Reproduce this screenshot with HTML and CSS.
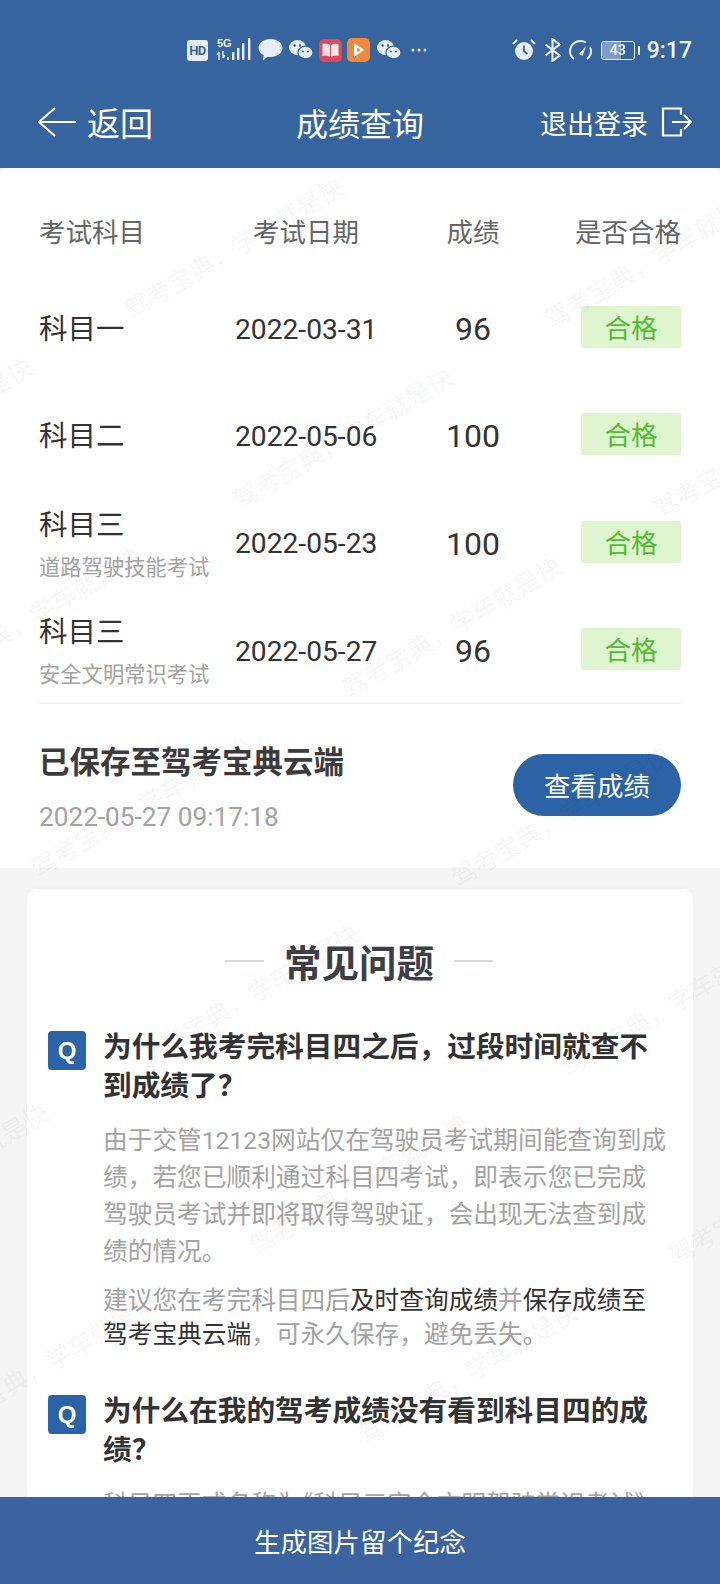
FILE: index.html
```html
<!DOCTYPE html>
<html lang="zh-CN">
<head>
    <meta charset="UTF-8">
    <meta name="viewport" content="width=device-width, initial-scale=1.0">
    <title>成绩查询</title>
    <link rel="stylesheet" href="styles.css">
</head>
<body>
<div class="page">
    <header class="top">
        <div class="status">
            <span class="hd">HD</span>
            <svg class="ic-net" width="36" height="24" viewBox="0 0 36 24">
                <text x="1" y="9" class="net-text">5G</text>
                <path d="M3 14v8M3 14l-2 3M7 13v7M7 20l2-3" stroke="#e8eef7" stroke-width="1.4" fill="none"/>
                <rect x="11" y="19" width="2" height="3" fill="#e8eef7"/>
                <rect x="16" y="14" width="2.4" height="8" fill="#e8eef7"/>
                <rect x="21" y="10" width="2.4" height="12" fill="#e8eef7"/>
                <rect x="26" y="5" width="2.4" height="17" fill="#e8eef7"/>
                <rect x="32" y="0" width="2.4" height="22" fill="#e8eef7"/>
            </svg>
            <svg class="ic-bubble" width="25" height="22" viewBox="0 0 25 22">
                <path d="M12.5 0C19 0 24.500 3.800 24.500 9S19 18 12.500 18c-1 0-2-.1-3-.3L5 21.500l.6-5.300C2.200 14.600.500 12 .500 9 .500 3.800 6 0 12.500 0z" fill="#e8eef7"/>
            </svg>
            <svg class="ic-wx" width="24" height="20" viewBox="0 0 24 20">
                <ellipse cx="8.500" cy="7.500" rx="8.500" ry="7.500" fill="#e8eef7"/>
                <circle cx="5.700" cy="5.500" r="1.200" fill="#36649f"/>
                <circle cx="11" cy="5.500" r="1.200" fill="#36649f"/>
                <ellipse cx="16.500" cy="12.500" rx="7.500" ry="6.300" fill="#e8eef7" stroke="#36649f" stroke-width="1.200"/>
                <circle cx="14" cy="11.500" r="1" fill="#36649f"/>
                <circle cx="19" cy="11.500" r="1" fill="#36649f"/>
            </svg>
            <svg class="ic-book" width="23" height="23" viewBox="0 0 23 23">
                <rect width="23" height="23" rx="5" fill="#de4a5c"/>
                <path d="M3.500 5c3-.6 5.800-.4 7.500 1v12c-1.700-1.200-4.500-1.500-7.500-1zM19.500 5c-3-.6-5.800-.4-7.500 1v12c1.700-1.200 4.500-1.500 7.500-1z" fill="#f9e6e8"/>
            </svg>
            <svg class="ic-play" width="23" height="24" viewBox="0 0 23 24">
                <rect width="23" height="24" rx="5" fill="#f4883a"/>
                <path d="M7 5v14l10-7zM10 9.500v5l3.500-2.500z" fill="#fff" fill-rule="evenodd"/>
            </svg>
            <svg class="ic-wx" width="24" height="20" viewBox="0 0 24 20">
                <ellipse cx="8.500" cy="7.500" rx="8.500" ry="7.500" fill="#e8eef7"/>
                <circle cx="5.700" cy="5.500" r="1.200" fill="#36649f"/>
                <circle cx="11" cy="5.500" r="1.200" fill="#36649f"/>
                <ellipse cx="16.500" cy="12.500" rx="7.500" ry="6.300" fill="#e8eef7" stroke="#36649f" stroke-width="1.200"/>
                <circle cx="14" cy="11.500" r="1" fill="#36649f"/>
                <circle cx="19" cy="11.500" r="1" fill="#36649f"/>
            </svg>
            <svg class="ic-dots" width="16" height="4" viewBox="0 0 16 4">
                <circle cx="2" cy="2" r="1.500" fill="#e8eef7"/>
                <circle cx="8" cy="2" r="1.500" fill="#e8eef7"/>
                <circle cx="14" cy="2" r="1.500" fill="#e8eef7"/>
            </svg>
            <div class="status-right">
                <svg class="ic-alarm" width="24" height="22" viewBox="0 0 24 22">
                    <circle cx="12" cy="12" r="9" fill="#e8eef7"/>
                    <path d="M12 6.500V12l3.500 3" stroke="#36649f" stroke-width="1.700" fill="none"/>
                    <path d="M1 5l4-4M23 5l-4-4" stroke="#e8eef7" stroke-width="2.200" fill="none"/>
                </svg>
                <svg class="ic-bt" width="17" height="24" viewBox="0 0 17 24">
                    <path d="M1.500 6.500l14 11-7 5.500V1l7 5.500-14 11" stroke="#e8eef7" stroke-width="2.100" fill="none"/>
                </svg>
                <svg class="ic-speed" width="23" height="20" viewBox="0 0 23 20">
                    <path d="M5 19C2.500 17 1 14.500 1 11.500 1 5.700 5.700 1 11.500 1c2 0 3.700.5 5.300 1.500M21 7c.6 1.400 1 3 1 4.500 0 3-1.500 5.500-4 7.500" stroke="#e8eef7" stroke-width="2" fill="none"/>
                    <path d="M10 14l7-8-3.500 10z" fill="#e8eef7"/>
                </svg>
                <div class="battery"><span class="battery-fill"></span><span class="battery-num">43</span></div>
                <span class="battery-tip"></span>
                <span class="clock">9:17</span>
            </div>
        </div>
        <nav class="nav">
            <div class="nav-back">
                <svg width="38" height="30" viewBox="0 0 38 30">
                    <path d="M17 1L1 15l16 14M1 15h37" stroke="#fff" stroke-width="2" fill="none"/>
                </svg>
                <span>返回</span>
            </div>
            <div class="nav-title">成绩查询</div>
            <div class="nav-out">
                <span>退出登录</span>
                <svg width="31" height="30" viewBox="0 0 31 30">
                    <path d="M20 8V1.500H2v27h18V22M11 15h19M23 8l7 7-7 7" stroke="#fff" stroke-width="2.200" fill="none"/>
                </svg>
            </div>
        </nav>
    </header>

    <main class="content">
        <section class="panel">
            <div class="score-head">
                <div>考试科目</div>
                <div class="center">考试日期</div>
                <div class="center">成绩</div>
                <div class="right">是否合格</div>
            </div>
            <div class="score-row">
                <div class="subject subject-one">科目一</div>
                <div class="date">2022-03-31</div>
                <div class="score">96</div>
                <div class="right"><span class="pass">合格</span></div>
            </div>
            <div class="score-row">
                <div class="subject subject-one">科目二</div>
                <div class="date">2022-05-06</div>
                <div class="score">100</div>
                <div class="right"><span class="pass">合格</span></div>
            </div>
            <div class="score-row">
                <div class="subject">科目三<small>道路驾驶技能考试</small></div>
                <div class="date">2022-05-23</div>
                <div class="score">100</div>
                <div class="right"><span class="pass">合格</span></div>
            </div>
            <div class="score-row">
                <div class="subject">科目三<small>安全文明常识考试</small></div>
                <div class="date">2022-05-27</div>
                <div class="score">96</div>
                <div class="right"><span class="pass">合格</span></div>
            </div>
            <div class="saved">
                <div>
                    <div class="saved-title">已保存至驾考宝典云端</div>
                    <div class="saved-time">2022-05-27 09:17:18</div>
                </div>
                <div class="saved-btn">查看成绩</div>
            </div>
        </section>

        <section class="faq">
            <h2 class="faq-title"><span>常见问题</span></h2>
            <div class="question">
                <span class="q-mark">Q</span>
                <div class="q-text">为什么我考完科目四之后，过段时间就查不到成绩了？</div>
            </div>
            <p class="answer">由于交管12123网站仅在驾驶员考试期间能查询到成绩，若您已顺利通过科目四考试，即表示您已完成驾驶员考试并即将取得驾驶证，会出现无法查到成绩的情况。</p>
            <p class="answer">建议您在考完科目四后<b>及时查询成绩</b>并<b>保存成绩至驾考宝典云端</b>，可永久保存，避免丢失。</p>
            <div class="question">
                <span class="q-mark">Q</span>
                <div class="q-text">为什么在我的驾考成绩没有看到科目四的成绩？</div>
            </div>
            <p class="answer answer-last">科目四正式名称为<span class="tight">《</span>科目三安全文明驾驶常识考试》</p>
        </section>
    </main>

    <!-- watermark tiles, they sit over the content -->
    <svg class="watermark" width="720" height="1584" viewBox="0 0 720 1584">
        <g transform="translate(6 3)">
            <text transform="translate(125 317) rotate(-30.7)">驾考宝典，学车就是快</text>
            <text transform="translate(545 327) rotate(-30.7)">驾考宝典，学车就是快</text>
            <text transform="translate(-186 497) rotate(-30.7)">驾考宝典，学车就是快</text>
            <text transform="translate(234 507) rotate(-30.7)">驾考宝典，学车就是快</text>
            <text transform="translate(654 517) rotate(-30.7)">驾考宝典，学车就是快</text>
            <text transform="translate(-77 686) rotate(-30.7)">驾考宝典，学车就是快</text>
            <text transform="translate(343 696) rotate(-30.7)">驾考宝典，学车就是快</text>
            <text transform="translate(32 875) rotate(-30.7)">驾考宝典，学车就是快</text>
            <text transform="translate(452 885) rotate(-30.7)">驾考宝典，学车就是快</text>
            <text transform="translate(141 1064) rotate(-30.7)">驾考宝典，学车就是快</text>
            <text transform="translate(561 1074) rotate(-30.7)">驾考宝典，学车就是快</text>
            <text transform="translate(-170 1243) rotate(-30.7)">驾考宝典，学车就是快</text>
            <text transform="translate(250 1253) rotate(-30.7)">驾考宝典，学车就是快</text>
            <text transform="translate(670 1263) rotate(-30.7)">驾考宝典，学车就是快</text>
            <text transform="translate(-61 1432) rotate(-30.7)">驾考宝典，学车就是快</text>
            <text transform="translate(359 1442) rotate(-30.7)">驾考宝典，学车就是快</text>
        </g>
    </svg>

    <footer class="bottom">生成图片留个纪念</footer>
</div>
</body>
</html>
```

FILE: styles.css
```css
* {
    box-sizing: border-box;
}
body {
    margin: 0;
    font-family: Roboto, "Noto Sans CJK SC", sans-serif;
    color: #333;
}
.page {
    position: relative;
    width: 720px;
    height: 1584px;
    display: flex;
    flex-direction: column;
    overflow: hidden;
    background-color: #f5f5f5;
}

/* top bar */
.top {
    position: relative;
    z-index: 2;
    height: 168px;
    padding-top: 36px;
    background-color: #36649f;
    color: #fff;
    flex: none;
}
.status {
    display: flex;
    align-items: center;
    height: 28px;
    padding: 0 28px 0 187px;
}
.hd {
    width: 21px;
    height: 21px;
    border-radius: 3px;
    background-color: #e8eef7;
    color: #36649f;
    font-size: 13px;
    font-weight: 700;
    line-height: 21px;
    letter-spacing: -0.5px;
    text-align: center;
}
.net-text {
    fill: #e8eef7;
    font-family: "Liberation Sans", sans-serif;
    font-size: 11px;
    font-weight: 700;
}
.ic-net {
    margin-left: 8px;
}
.ic-bubble {
    margin-left: 6px;
}
.ic-wx {
    margin-left: 6px;
}
.ic-book {
    margin-left: 6px;
}
.ic-play {
    margin-left: 5px;
}
.ic-play + .ic-wx {
    margin-left: 7px;
}
.ic-dots {
    margin-left: 10px;
}
.status-right {
    display: flex;
    align-items: center;
    margin-left: auto;
}
.ic-bt {
    margin-left: 8px;
}
.ic-speed {
    margin-left: 8px;
}
.battery {
    position: relative;
    width: 34px;
    height: 19px;
    margin-left: 9px;
    border: 1.500px solid #e8eef7;
    border-radius: 3px;
    overflow: hidden;
}
.battery-fill {
    display: block;
    width: 60%;
    height: 100%;
    background-color: #7f9dc6;
}
.battery-num {
    position: absolute;
    inset: 0;
    color: #eef3fa;
    font-size: 14px;
    font-weight: 500;
    line-height: 16px;
    text-align: center;
}
.battery-tip {
    width: 2px;
    height: 9px;
    margin-left: 3px;
    background-color: #e8eef7;
}
.clock {
    margin-left: 7px;
    color: #eef3fa;
    font-size: 23px;
    font-weight: 500;
}
.nav {
    display: grid;
    grid-template-columns: 1fr auto 1fr;
    align-items: center;
    height: 60px;
    margin-top: 28px;
    padding: 0 28px;
}
.nav-back {
    display: flex;
    align-items: center;
    gap: 11px;
    margin-left: 10px;
    font-size: 33px;
}
.nav-title {
    font-size: 32px;
}
.nav-out {
    display: flex;
    align-items: center;
    justify-content: flex-end;
    gap: 13px;
    font-size: 27px;
}

/* page body */
.content {
    flex: 1;
    min-height: 0;
    overflow: hidden;
}
.panel {
    background-color: #fff;
    border-radius: 8px 8px 0 0;
    padding: 42px 39px 0;
}
.score-head,
.score-row {
    display: grid;
    grid-template-columns: 196px 142px 192px 112px;
    align-items: center;
}
.score-head {
    height: 40px;
    margin-bottom: 23.500px;
    color: #666;
    font-size: 26.500px;
}
.center {
    text-align: center;
}
.right {
    text-align: right;
}
.score-row {
    height: 107.300px;
    font-size: 28.500px;
}
.subject {
    line-height: 44px;
}
.subject-one {
    padding-top: 6px;
}
.subject small {
    display: block;
    margin-top: 8px;
    color: #a3a3a3;
    font-size: 21.300px;
    line-height: 24px;
}
.date {
    padding-top: 4px;
    font-size: 28.200px;
    text-align: center;
    white-space: nowrap;
}
.score {
    padding-top: 4px;
    font-size: 32px;
    text-align: center;
}
.pass {
    display: inline-block;
    width: 100px;
    height: 42px;
    border-radius: 3px;
    background-color: #dff5d0;
    color: #52bd2e;
    font-size: 26.500px;
    line-height: 46px;
    text-align: center;
}
.saved {
    display: flex;
    justify-content: space-between;
    align-items: flex-start;
    padding: 37px 0 33px;
    border-top: 1px solid #f2f2f2;
}
.saved-title {
    color: #3c3c3c;
    font-size: 30.500px;
    font-weight: 700;
    line-height: 44px;
}
.saved-time {
    margin-top: 14px;
    color: #a3a3a3;
    font-size: 26.200px;
    line-height: 36px;
}
.saved-btn {
    width: 168px;
    height: 62px;
    margin-top: 13px;
    border-radius: 31px;
    background-color: #2c63a6;
    color: #fff;
    font-size: 26.500px;
    line-height: 66px;
    text-align: center;
}

.faq {
    margin: 21px 27px 0;
    padding: 47px 23px 0 21px;
    background-color: #fff;
    border-radius: 10px;
    box-shadow: 0 0 6px rgba(0, 0, 0, 0.03);
}
.faq-title {
    display: flex;
    align-items: center;
    justify-content: center;
    gap: 20px;
    height: 50px;
    margin: 0 0 40px;
    color: #3c4046;
    font-size: 37.500px;
    line-height: 50px;
}
.faq-title span {
    margin-top: 7px;
}
.faq-title::before,
.faq-title::after {
    content: "";
    width: 39px;
    height: 2px;
    background-color: #d5d8de;
}
.question {
    display: flex;
    align-items: flex-start;
    gap: 17px;
    color: #333;
    font-size: 28.700px;
    font-weight: 700;
    line-height: 39px;
}
.q-text {
    padding-top: 2px;
}
.q-mark {
    flex: none;
    width: 38px;
    height: 39px;
    margin-top: 5px;
    border-radius: 4px;
    background-color: #2a63a8;
    color: #fff;
    font-family: "Liberation Sans", sans-serif;
    font-size: 24px;
    line-height: 39px;
    text-align: center;
}
.answer {
    margin: 16px 0 14.500px 55px;
    color: #a3a3a3;
    font-size: 24.700px;
    line-height: 37px;
}
.answer + .answer {
    margin-top: 0;
    margin-bottom: 37.500px;
    line-height: 34px;
}
.answer + .answer.answer-last {
    line-height: 37px;
}
.answer b {
    color: #333;
    font-weight: 400;
}
.tight {
    margin-left: -12px;
}

.watermark {
    position: absolute;
    top: 0;
    left: 0;
    z-index: 1;
    pointer-events: none;
    font-size: 25px;
    fill: rgba(0, 0, 0, 0.055);
}

.bottom {
    position: relative;
    z-index: 2;
    flex: none;
    height: 87px;
    background-color: #3a63a0;
    color: #fff;
    font-size: 26.500px;
    line-height: 91px;
    text-align: center;
}
```
